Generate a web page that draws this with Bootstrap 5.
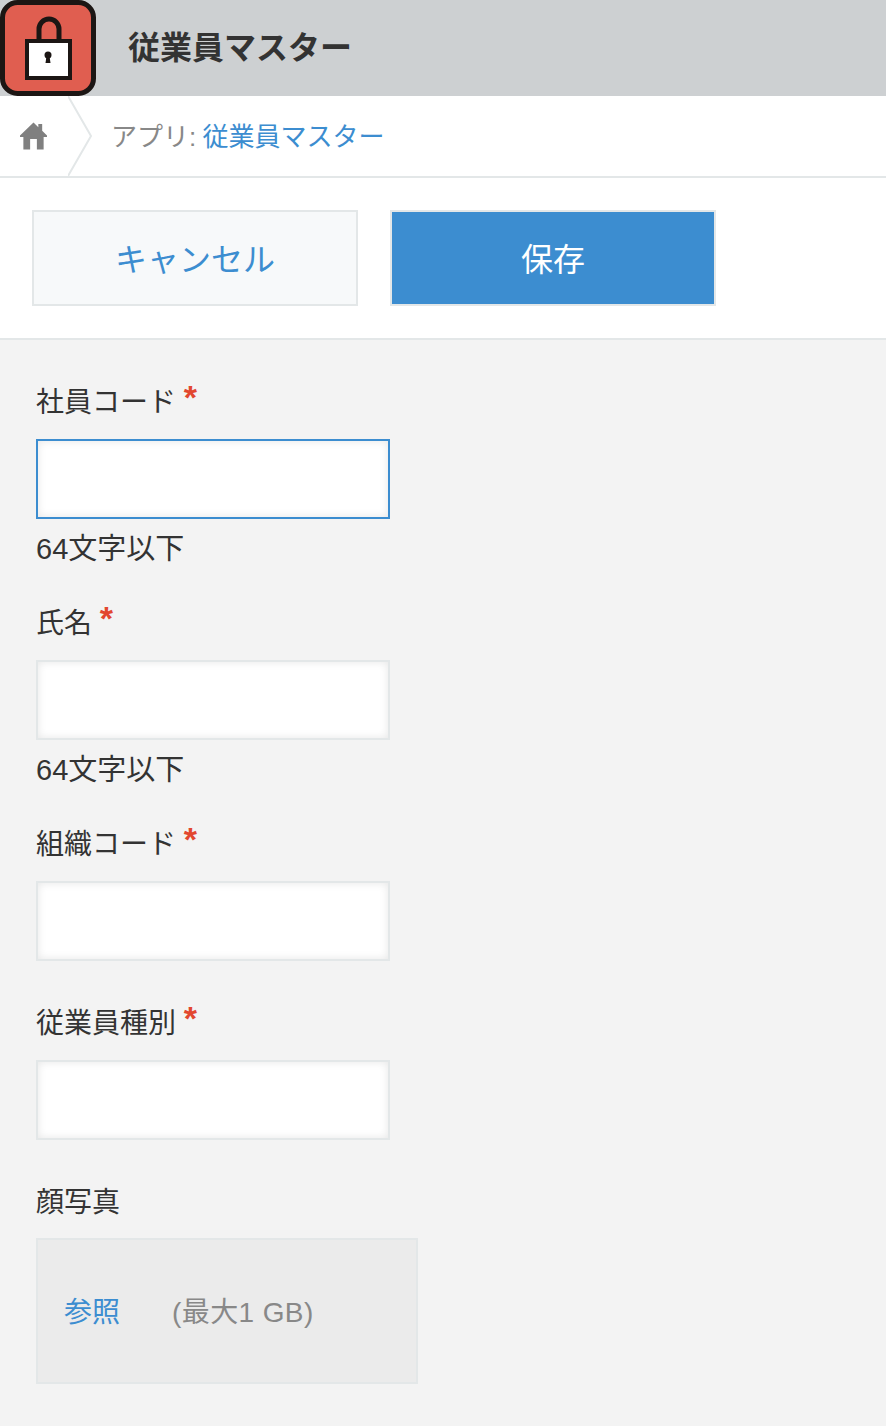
<!DOCTYPE html>
<html lang="ja">
<head>
  <meta charset="UTF-8" />
  <meta name="viewport" content="width=device-width, initial-scale=1" />
  <title>従業員マスター</title>
  <link href="https://cdn.jsdelivr.net/npm/bootstrap@5.3.3/dist/css/bootstrap.min.css" rel="stylesheet" />
  <style>
    body {
      background-color: #f3f3f3;
      color: #333;
      font-family: "Liberation Sans", "Noto Sans CJK JP", sans-serif;
      font-size: 28px;
    }

    .app-header {
      background-color: #cdd0d2;
      height: 96px;
    }

    .app-title {
      font-size: 32px;
      font-weight: 700;
      margin-left: 32px;
      color: #333;
    }

    .crumbs {
      background-color: #fff;
      height: 82px;
      border-bottom: 2px solid #e3e7e8;
      font-size: 26px;
      color: #888;
    }

    .crumb-home {
      width: 68px;
      padding-left: 20px;
    }

    .crumb-text {
      margin-left: 19px;
      padding-top: 2px;
    }

    .crumb-text .link-blue {
      margin-left: -1px;
    }

    .link-blue {
      color: #3c8dd0;
      text-decoration: none;
    }

    .toolbar {
      background-color: #fff;
      height: 162px;
      padding: 32px;
      gap: 32px;
      border-bottom: 2px solid #e3e7e8;
    }

    .btn.tool-btn {
      width: 326px;
      height: 96px;
      font-size: 32px;
      border: 2px solid #e3e7e8;
      border-radius: 0;
      padding: 4px 0 0;
    }

    .btn.btn-cancel {
      background-color: #f7f9fa;
      color: #3c8dd0;
    }

    .btn.btn-save {
      background-color: #3c8dd0;
      color: #fff;
    }

    .form-area {
      padding: 41px 36px 42px;
    }

    .field-block {
      margin-bottom: 41px;
    }

    .field-label {
      display: block;
      height: 40px;
      line-height: 44px;
      margin-bottom: 18px;
      font-size: 28px;
    }

    .req-mark {
      color: #e2472f;
      font-weight: 700;
      font-size: 34px;
      line-height: 0;
      vertical-align: 3px;
    }

    .form-control.text-box {
      width: 354px;
      height: 80px;
      border: 2px solid #e3e7e8;
      border-radius: 0;
      background-color: #fff;
      box-shadow: inset 0 0 8px rgba(0, 0, 0, .1);
    }

    .form-control.text-box.is-focused {
      border-color: #3c8dd0;
    }

    .field-hint {
      margin-top: 17px;
      margin-bottom: 0;
      height: 25px;
      line-height: 26px;
      font-size: 29px;
    }

    .upload-box {
      width: 382px;
      height: 146px;
      margin-top: -1px;
      padding: 3px 0 0 26px;
      background-color: #ebebeb;
      border: 2px solid #e3e7e8;
    }

    .upload-limit {
      color: #888;
      margin-left: 52px;
      font-size: 28px;
      letter-spacing: .4px;
    }
  </style>
</head>
<body>

  <!-- App header -->
  <div class="app-header d-flex align-items-center">
    <svg width="96" height="96" viewBox="0 0 96 96">
      <rect x="2.500" y="2.500" width="91" height="91" rx="15" fill="#e05e50" stroke="#1c1614" stroke-width="5" />
      <path d="M39 41V29a10 10 0 0 1 20 0V41" fill="none" stroke="#1c1614" stroke-width="5" />
      <rect x="27" y="41" width="43" height="37" fill="#fff" stroke="#1c1614" stroke-width="4" />
      <circle cx="48" cy="55" r="3.500" fill="#1c1614" />
      <path d="M46.500 56h3l1 7h-5z" fill="#1c1614" />
    </svg>
    <span class="app-title">従業員マスター</span>
  </div>

  <!-- Breadcrumb -->
  <div class="crumbs d-flex align-items-center">
    <div class="crumb-home d-flex align-items-center">
      <svg width="27" height="28" viewBox="0 0 28 28">
        <path fill="#808080" d="M14 0L19 4.800V1.500H23V8.500L28 13.500V15H24.500V28H17.500V17H10.500V28H3.500V15H0V13.500Z" />
      </svg>
    </div>
    <svg width="24" height="80" viewBox="0 0 24 80">
      <path d="M0 0L23 40L0 80" fill="none" stroke="#e3e7e8" stroke-width="2" />
    </svg>
    <div class="crumb-text">アプリ: <a href="#" class="link-blue">従業員マスター</a></div>
  </div>

  <!-- Buttons -->
  <div class="toolbar d-flex">
    <button type="button" class="btn tool-btn btn-cancel">キャンセル</button>
    <button type="button" class="btn tool-btn btn-save">保存</button>
  </div>

  <!-- Form -->
  <form class="form-area">
    <div class="field-block">
      <label class="field-label">社員コード <span class="req-mark">*</span></label>
      <input type="text" class="form-control text-box is-focused" />
      <p class="field-hint">64文字以下</p>
    </div>
    <div class="field-block">
      <label class="field-label">氏名 <span class="req-mark">*</span></label>
      <input type="text" class="form-control text-box" />
      <p class="field-hint">64文字以下</p>
    </div>
    <div class="field-block">
      <label class="field-label">組織コード <span class="req-mark">*</span></label>
      <input type="text" class="form-control text-box" />
    </div>
    <div class="field-block">
      <label class="field-label">従業員種別 <span class="req-mark">*</span></label>
      <input type="text" class="form-control text-box" />
    </div>
    <div>
      <label class="field-label">顔写真</label>
      <div class="upload-box d-flex align-items-center">
        <a href="#" class="link-blue">参照</a>
        <span class="upload-limit">(最大1 GB)</span>
      </div>
    </div>
  </form>

  <script src="https://cdn.jsdelivr.net/npm/bootstrap@5.3.3/dist/js/bootstrap.bundle.min.js"></script>
</body>
</html>
